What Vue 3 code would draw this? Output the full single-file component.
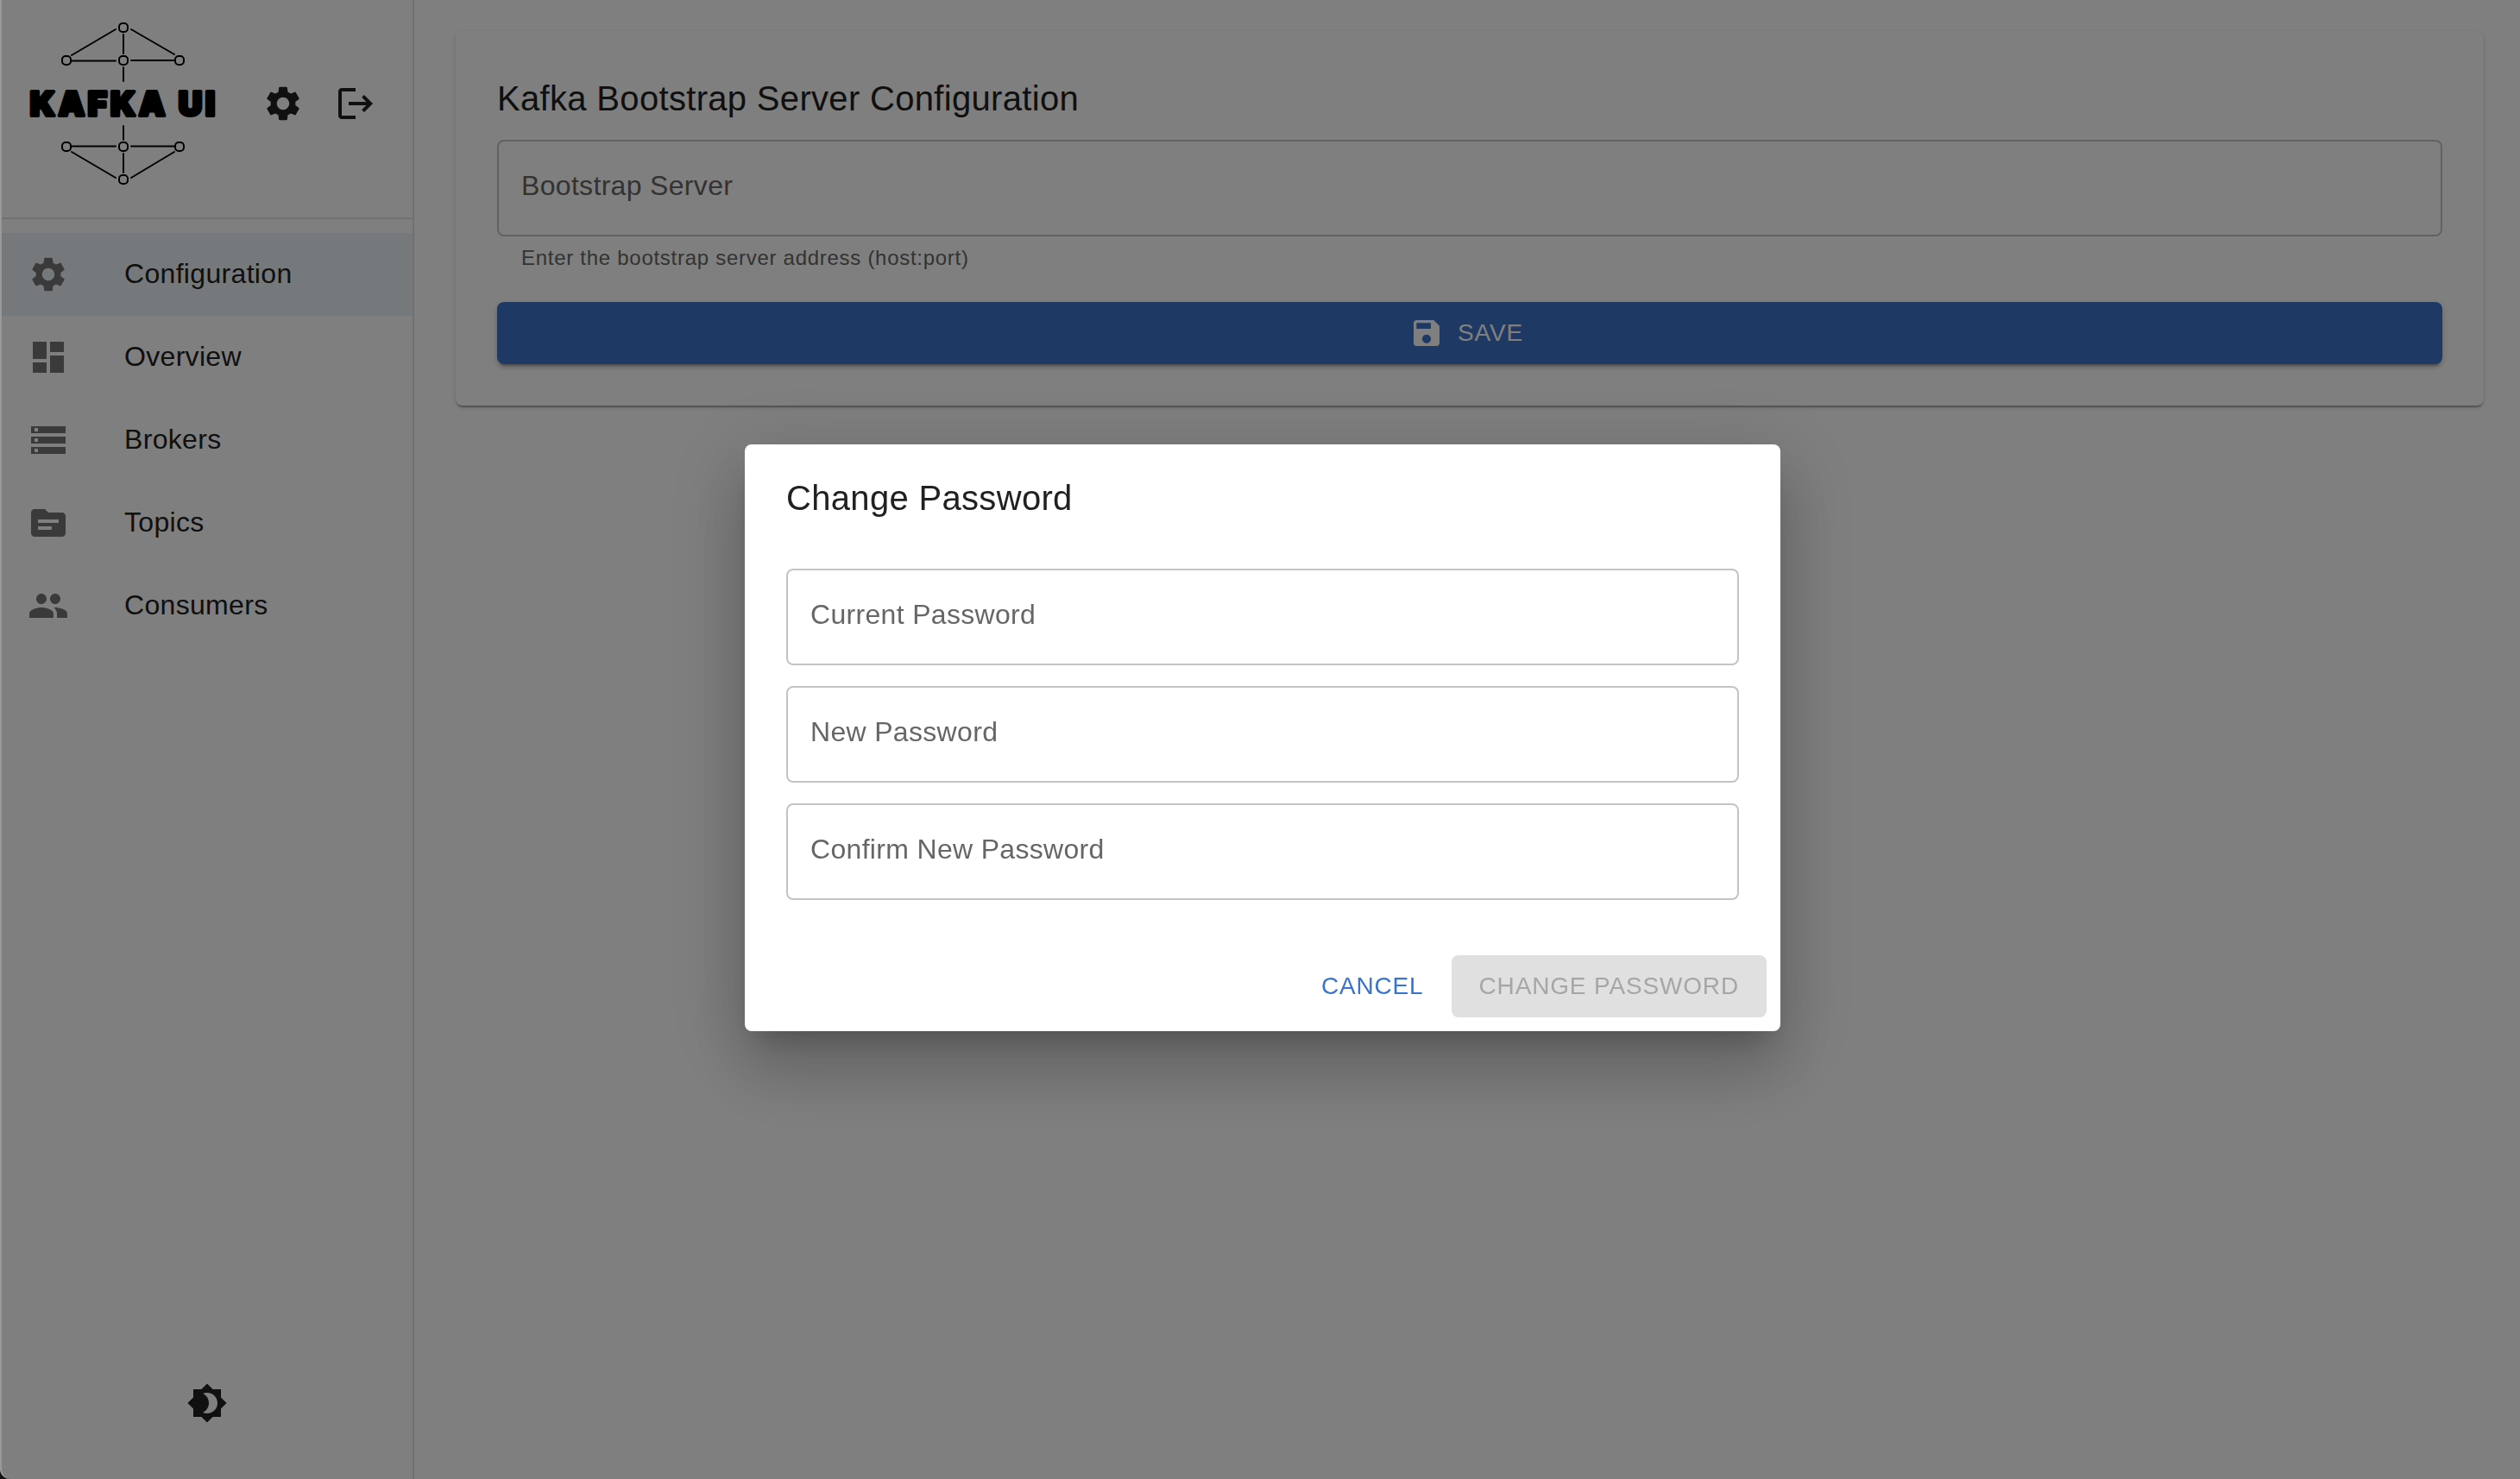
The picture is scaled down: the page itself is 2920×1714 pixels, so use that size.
<script setup>
import { ref, computed } from 'vue'

const icons = {
  settings:
    'M19.14 12.94c.04-.3.06-.61.06-.94 0-.32-.02-.64-.07-.94l2.03-1.58c.18-.14.23-.41.12-.61l-1.92-3.32c-.12-.22-.37-.29-.59-.22l-2.39.96c-.5-.38-1.03-.7-1.62-.94l-.36-2.54c-.04-.24-.24-.41-.48-.41h-3.84c-.24 0-.43.17-.47.41l-.36 2.54c-.59.24-1.13.57-1.62.94l-2.39-.96c-.22-.08-.47 0-.59.22L2.74 8.87c-.12.21-.08.47.12.61l2.03 1.58c-.05.3-.09.63-.09.94s.02.64.07.94l-2.03 1.58c-.18.14-.23.41-.12.61l1.92 3.32c.12.22.37.29.59.22l2.39-.96c.5.38 1.03.7 1.62.94l.36 2.54c.05.24.24.41.48.41h3.84c.24 0 .44-.17.47-.41l.36-2.54c.59-.24 1.13-.56 1.62-.94l2.39.96c.22.08.47 0 .59-.22l1.92-3.32c.12-.22.07-.47-.12-.61zM12 15.6c-1.98 0-3.6-1.62-3.6-3.6s1.62-3.6 3.6-3.6 3.6 1.62 3.6 3.6-1.62 3.6-3.6 3.6',
  logout:
    'm17 7-1.41 1.41L18.17 11H8v2h10.17l-2.58 2.58L17 17l5-5zM4 5h8V3H4c-1.1 0-2 .9-2 2v14c0 1.1.9 2 2 2h8v-2H4z',
  dashboard: 'M3 13h8V3H3zm0 8h8v-6H3zm10 0h8V11h-8zm0-18v6h8V3z',
  storage:
    'M2 20h20v-4H2zm2-3h2v2H4zM2 4v4h20V4zm4 3H4V5h2zm-4 7h20v-4H2zm2-3h2v2H4z',
  topic:
    'M20 6h-8l-2-2H4c-1.1 0-1.99.9-1.99 2L2 18c0 1.1.9 2 2 2h16c1.1 0 2-.9 2-2V8c0-1.1-.9-2-2-2m-6 10H6v-2h8zm4-4H6v-2h12z',
  people:
    'M16 11c1.66 0 2.99-1.34 2.99-3S17.66 5 16 5s-3 1.34-3 3 1.34 3 3 3m-8 0c1.66 0 2.99-1.34 2.99-3S9.66 5 8 5 5 6.34 5 8s1.34 3 3 3m0 2c-2.33 0-7 1.17-7 3.5V19h14v-2.5c0-2.33-4.67-3.5-7-3.5m8 0c-.29 0-.62.02-.97.05 1.16.84 1.97 1.97 1.97 3.45V19h6v-2.5c0-2.33-4.67-3.5-7-3.5',
  save:
    'M17 3H5c-1.11 0-2 .9-2 2v14c0 1.1.89 2 2 2h14c1.1 0 2-.9 2-2V7zm-5 16c-1.66 0-3-1.34-3-3s1.34-3 3-3 3 1.34 3 3-1.34 3-3 3m3-10H5V5h10z',
  theme:
    'M20 8.69V4h-4.69L12 .69 8.69 4H4v4.69L.69 12 4 15.31V20h4.69L12 23.31 15.31 20H20v-4.69L23.31 12zM12 18c-.89 0-1.74-.2-2.5-.55C11.56 16.5 13 14.42 13 12s-1.44-4.5-3.5-5.45C10.26 6.2 11.11 6 12 6c3.31 0 6 2.69 6 6s-2.69 6-6 6',
}

const navItems = [
  { label: 'Configuration', icon: icons.settings, active: true },
  { label: 'Overview', icon: icons.dashboard },
  { label: 'Brokers', icon: icons.storage },
  { label: 'Topics', icon: icons.topic },
  { label: 'Consumers', icon: icons.people },
]

const server = ref('')
const fields = ref([
  { id: 'current-password', label: 'Current Password', value: '' },
  { id: 'new-password', label: 'New Password', value: '' },
  { id: 'confirm-password', label: 'Confirm New Password', value: '' },
])
const incomplete = computed(() => fields.value.some((f) => !f.value))

const topNodes = [[111, 12], [45, 50], [111, 50], [176, 50]]
const bottomNodes = [[45, 150], [111, 150], [176, 150], [111, 188]]
</script>

<template>
  <div class="app">
    <aside class="sidebar">
      <header class="brand">
        <svg class="logo" viewBox="0 0 224 200" role="img" aria-label="Kafka UI">
          <g class="links">
            <path d="M51 44 102 14M120 14l50 29M111 20v22M51 50.5h51M120 50h50" />
            <path d="M111 58v16M111 126v16" />
            <path d="M51 149.5h51M120 149.5h50M111 158v22M51 156l51 30M120 186l50-30" />
          </g>
          <g class="nodes">
            <rect
              v-for="([x, y], i) in [...topNodes, ...bottomNodes]"
              :key="i"
              :x="x - 5"
              :y="y - 5"
              width="10"
              height="10"
              rx="4"
            />
          </g>
          <text class="wordmark" x="112" y="114">KAFKA UI</text>
        </svg>
        <div class="brand-actions">
          <button class="icon-button" type="button" aria-label="Settings">
            <svg class="icon" viewBox="0 0 24 24"><path :d="icons.settings" /></svg>
          </button>
          <button class="icon-button" type="button" aria-label="Log out">
            <svg class="icon" viewBox="0 0 24 24"><path :d="icons.logout" /></svg>
          </button>
        </div>
      </header>
      <nav class="nav">
        <a
          v-for="item in navItems"
          :key="item.label"
          href="#"
          class="nav-item"
          :class="{ active: item.active }"
        >
          <svg class="icon" viewBox="0 0 24 24"><path :d="item.icon" /></svg>
          <span>{{ item.label }}</span>
        </a>
      </nav>
      <footer class="sidebar-footer">
        <button class="icon-button" type="button" aria-label="Toggle theme">
          <svg class="icon" viewBox="0 0 24 24"><path :d="icons.theme" /></svg>
        </button>
      </footer>
    </aside>

    <main class="main">
      <form class="card" @submit.prevent>
        <h1 class="title card-title">Kafka Bootstrap Server Configuration</h1>
        <div class="field">
          <label for="bootstrap-server">Bootstrap Server</label>
          <input id="bootstrap-server" v-model="server" type="text" />
        </div>
        <p class="helper">Enter the bootstrap server address (host:port)</p>
        <button class="button primary" type="submit">
          <svg class="button-icon" viewBox="0 0 24 24"><path :d="icons.save" /></svg>
          SAVE
        </button>
      </form>
    </main>

    <div class="backdrop">
      <form class="dialog" role="dialog" aria-labelledby="dialog-title" @submit.prevent>
        <h2 id="dialog-title" class="title dialog-title">Change Password</h2>
        <div class="dialog-fields">
          <div v-for="field in fields" :key="field.id" class="field">
            <label :for="field.id">{{ field.label }}</label>
            <input :id="field.id" v-model="field.value" type="password" />
          </div>
        </div>
        <div class="dialog-actions">
          <button class="button text" type="button">CANCEL</button>
          <button class="button filled" type="submit" :disabled="incomplete">CHANGE PASSWORD</button>
        </div>
      </form>
    </div>
    <div class="window-edge"></div>
  </div>
</template>

<style>
body {
  margin: 0;
  background: #fff;
}
</style>

<style scoped>
.app {
  display: flex;
  min-height: 100vh;
  overflow: hidden;
  font-family: Helvetica, "Liberation Sans", Arial, sans-serif;
  font-size: 32px;
  letter-spacing: 0.01em;
  color: #212121;
}

.app *,
.app {
  box-sizing: border-box;
}

.sidebar {
  display: flex;
  flex-direction: column;
  flex: 0 0 480px;
  border-right: 2px solid #e0e0e0;
}

.brand {
  display: flex;
  align-items: center;
  gap: 32px;
  padding: 20px 24px 32px 32px;
  border-bottom: 2px solid #e0e0e0;
}

.logo {
  width: 224px;
  height: 200px;
  overflow: visible;
}

.links,
.nodes {
  fill: none;
  stroke: #000;
  stroke-width: 2;
  stroke-linecap: round;
}

.wordmark {
  font-family: Inter, sans-serif;
  font-size: 38px;
  font-weight: 900;
  letter-spacing: 4px;
  text-anchor: middle;
  stroke: #000;
  stroke-width: 4;
  stroke-linejoin: round;
}

.brand-actions {
  display: flex;
  gap: 4px;
}

.icon {
  display: block;
  width: 48px;
  height: 48px;
  fill: currentColor;
}

.icon-button {
  padding: 16px;
  border: 0;
  border-radius: 50%;
  background: none;
  color: inherit;
}

.nav {
  padding: 16px 0;
}

.nav-item {
  display: flex;
  align-items: flex-start;
  gap: 64px;
  padding: 24px 32px;
  line-height: 46px;
  color: inherit;
  text-decoration: none;
}

.nav-item .icon {
  color: #757575;
}

.nav-item.active {
  background: #ecf3f9;
}

.sidebar-footer {
  display: flex;
  justify-content: center;
  margin-top: auto;
  padding: 0 0 48px 2px;
}

.main {
  flex: 1;
  padding: 36px 42px 48px 48px;
}

.card {
  padding: 48px;
  border-radius: 8px;
  box-shadow: 0 4px 2px -2px rgba(0, 0, 0, 0.2), 0 2px 2px rgba(0, 0, 0, 0.14),
    0 2px 6px rgba(0, 0, 0, 0.12);
}

.title {
  margin: 0;
  font-size: 40px;
  font-weight: 400;
  line-height: 60px;
}

.card-title {
  padding-bottom: 18px;
}

.field {
  position: relative;
}

.field label {
  position: absolute;
  top: 30px;
  left: 28px;
  line-height: 46px;
  color: #666;
}

.field input {
  display: block;
  width: 100%;
  height: 112px;
  padding: 32px 28px;
  border: 2px solid #c4c4c4;
  border-radius: 8px;
  background: none;
  color: inherit;
  font: inherit;
}

.helper {
  margin: 6px 28px 32px;
  font-size: 24px;
  line-height: 38px;
  letter-spacing: 0.03em;
  color: #666;
}

.button {
  display: flex;
  align-items: center;
  justify-content: center;
  padding: 12px 32px;
  border: 0;
  border-radius: 8px;
  font-family: inherit;
  font-size: 28px;
  line-height: 48px;
  letter-spacing: 0.03em;
}

.button-icon {
  width: 40px;
  height: 40px;
  margin: 0 16px 0 -8px;
  fill: currentColor;
}

.primary {
  width: 100%;
  background: #3b72c9;
  color: #fff;
  box-shadow: 0 6px 2px -4px rgba(0, 0, 0, 0.2), 0 4px 4px rgba(0, 0, 0, 0.14),
    0 2px 10px rgba(0, 0, 0, 0.12);
}

.text {
  padding: 12px 16px;
  background: none;
  color: #3874cb;
}

.filled:disabled {
  background: #e0e0e0;
  color: #a6a6a6;
}

.backdrop {
  position: fixed;
  inset: 0;
  display: flex;
  align-items: center;
  justify-content: center;
  padding: 0 0 4px 6px;
  background: rgba(0, 0, 0, 0.5);
}

.dialog {
  width: 1200px;
  max-width: 90%;
  border-radius: 8px;
  background: #fff;
  box-shadow: 0 22px 30px -14px rgba(0, 0, 0, 0.2), 0 48px 76px 6px rgba(0, 0, 0, 0.14),
    0 18px 92px 16px rgba(0, 0, 0, 0.12);
}

.dialog-title {
  padding: 32px 48px 36px;
}

.dialog-fields {
  display: flex;
  flex-direction: column;
  gap: 24px;
  padding: 16px 48px 48px;
}

.dialog-actions {
  display: flex;
  justify-content: flex-end;
  gap: 16px;
  padding: 16px;
}

.window-edge {
  position: fixed;
  inset: 0 -20px 0 0;
  border-left: 2px solid #999;
  border-bottom-left-radius: 12px;
  box-shadow: 0 0 0 16px #101414;
  pointer-events: none;
}
</style>
